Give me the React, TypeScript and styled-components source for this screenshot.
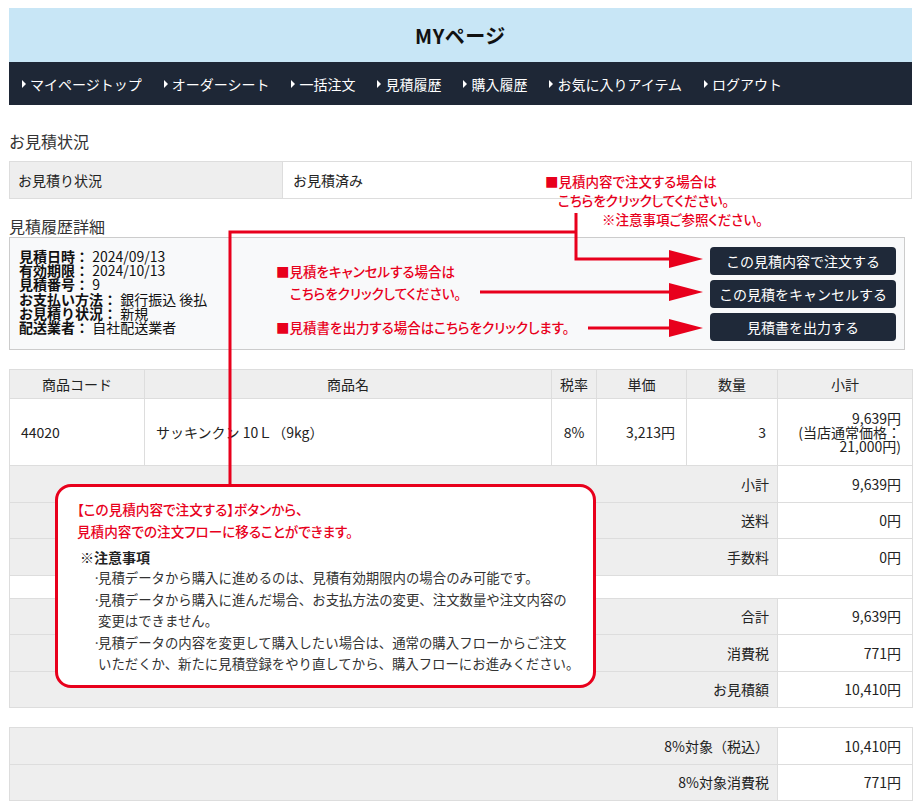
import React from "react";
import styled, { createGlobalStyle } from "styled-components";

const RED = "#e8001c";
const FONT = `"Noto Sans CJK JP", "Noto Sans", "Liberation Sans", sans-serif`;

const GlobalStyle = createGlobalStyle`
  html, body { margin: 0; padding: 0; background: #fff; }
  body { font-family: ${FONT}; color: #333; }
  * { box-sizing: border-box; }
`;

const Page = styled.div`
  position: relative;
  width: 920px;
  height: 810px;
  overflow: hidden;
  padding: 8px 8px 0 9px;
`;

const Header = styled.header`
  height: 54px;
  background: #c8e6f6;
  display: flex;
  align-items: center;
  justify-content: center;
`;

const Title = styled.h1`
  margin: 0;
  font-size: 20px;
  font-weight: 700;
  color: #111;
  letter-spacing: 0.5px;
`;

const Nav = styled.nav`
  height: 43px;
  background: #1e2736;
  display: flex;
  align-items: center;
  padding-left: 13px;
  gap: 22px;
`;

const NavItem = styled.a`
  display: flex;
  align-items: center;
  gap: 4px;
  color: #fff;
  font-size: 14px;
  text-decoration: none;
  white-space: nowrap;
  &::before {
    content: "";
    border-left: 4px solid #fff;
    border-top: 4px solid transparent;
    border-bottom: 4px solid transparent;
  }
`;

const SectionTitle = styled.h2<{ $top: number }>`
  margin: ${(p) => p.$top}px 0 0;
  font-size: 16px;
  font-weight: 400;
  line-height: 22px;
  color: #333;
`;

const StatusTable = styled.div`
  margin-top: 9px;
  height: 38px;
  display: grid;
  grid-template-columns: 272px 1fr;
  border: 1px solid #ddd;
`;

const StatusCell = styled.div<{ $label?: boolean }>`
  display: flex;
  align-items: center;
  padding-left: ${(p) => (p.$label ? 8 : 10)}px;
  font-size: 14px;
  color: #222;
  background: ${(p) => (p.$label ? "#eeeeee" : "#fff")};
  border-left: ${(p) => (p.$label ? "none" : "1px solid #ddd")};
`;

const DetailBox = styled.div`
  width: 896px;
  height: 113px;
  border: 1px solid #ccc;
  background: #f8f9fa;
  display: flex;
  justify-content: space-between;
  padding: 9px 8px 0 9px;
`;

const DetailList = styled.div`
  padding-top: 2px;
  font-size: 14px;
  line-height: 14.2px;
  color: #111;
`;

const DetailRow = styled.div`
  white-space: nowrap;
  b {
    font-weight: 700;
  }
`;

const ButtonStack = styled.div`
  display: flex;
  flex-direction: column;
  gap: 5px;
`;

const ActionButton = styled.button`
  width: 186px;
  height: 28px;
  border: none;
  border-radius: 4px;
  background: #1f2939;
  color: #fff;
  font-family: ${FONT};
  font-size: 14px;
  padding: 0;
  cursor: pointer;
`;

const Table = styled.table<{ $top: number }>`
  margin-top: ${(p) => p.$top}px;
  width: 903px;
  border-collapse: collapse;
  table-layout: fixed;
  font-size: 14px;
  color: #222;
`;

const Col = styled.col<{ $w: number }>`
  width: ${(p) => p.$w}px;
`;

const Th = styled.th`
  background: #eeeeee;
  font-weight: 400;
  height: 29px;
  padding: 0;
  border: 1px solid #ddd;
  text-align: center;
`;

const Td = styled.td<{ $align?: "left" | "center" | "right" }>`
  border: 1px solid #ddd;
  padding: 12px 11px;
  height: 66px;
  text-align: ${(p) => p.$align || "left"};
  line-height: 14px;
  white-space: nowrap;
`;

const SumLabel = styled.td`
  background: #eeeeee;
  border: 1px solid #ddd;
  text-align: right;
  padding: 0 8px 0 0;
  height: 36.5px;
`;

const SumValue = styled.td`
  border: 1px solid #ddd;
  text-align: right;
  padding: 0 11px 0 0;
  height: 36.5px;
`;

const BlankCell = styled.td`
  border: 1px solid #ddd;
  height: 23px;
  padding: 0;
`;

const Overlay = styled.svg`
  position: absolute;
  left: 0;
  top: 0;
  pointer-events: none;
`;

const RedNote = styled.div<{ $x: number; $y: number }>`
  position: absolute;
  left: ${(p) => p.$x}px;
  top: ${(p) => p.$y}px;
  color: ${RED};
  font-size: 13.5px;
  line-height: 18px;
  font-weight: 500;
  white-space: nowrap;
  font-feature-settings: "palt";
`;

const Callout = styled.div`
  position: absolute;
  left: 55px;
  top: 484px;
  width: 541px;
  height: 204px;
  border: 3px solid ${RED};
  border-radius: 16px;
  background: #fff;
  padding: 11px 8px 0 19px;
`;

const CalloutLead = styled.div`
  color: ${RED};
  font-size: 13.6px;
  line-height: 22px;
  font-weight: 500;
  white-space: nowrap;
  font-feature-settings: "palt";
`;

const CautionTitle = styled.div`
  margin-top: 5px;
  padding-left: 3px;
  font-size: 14px;
  line-height: 20px;
  font-weight: 700;
  color: #222;
`;

const CautionList = styled.ul`
  list-style: none;
  margin: 0;
  padding: 0 0 0 16px;
  font-size: 13.4px;
  line-height: 21.6px;
  color: #333;
`;

const CautionItem = styled.li`
  position: relative;
  padding-left: 5px;
  white-space: nowrap;
  &::before {
    content: "·";
    position: absolute;
    left: 0;
    top: 0;
  }
`;

const navItems = [
  "マイページトップ",
  "オーダーシート",
  "一括注文",
  "見積履歴",
  "購入履歴",
  "お気に入りアイテム",
  "ログアウト",
];

const details: [string, string][] = [
  ["見積日時：", "2024/09/13"],
  ["有効期限：", "2024/10/13"],
  ["見積番号：", "9"],
  ["お支払い方法：", "銀行振込 後払"],
  ["お見積り状況：", "新規"],
  ["配送業者：", "自社配送業者"],
];

const summary1: [string, string][] = [
  ["小計", "9,639円"],
  ["送料", "0円"],
  ["手数料", "0円"],
];
const summary2: [string, string][] = [
  ["合計", "9,639円"],
  ["消費税", "771円"],
  ["お見積額", "10,410円"],
];
const taxRows: [string, string][] = [
  ["8%対象（税込）", "10,410円"],
  ["8%対象消費税", "771円"],
];

const Arrow = ({ x1, y, x2 }: { x1: number; y: number; x2: number }) => (
  <>
    <line x1={x1} y1={y} x2={x2 - 32} y2={y} stroke={RED} strokeWidth={3} />
    <polygon points={`${x2 - 34},${y - 9} ${x2},${y} ${x2 - 34},${y + 9}`} fill={RED} />
  </>
);

export default function App() {
  return (
    <>
      <GlobalStyle />
      <Page>
        <Header>
          <Title>MYページ</Title>
        </Header>
        <Nav>
          {navItems.map((n) => (
            <NavItem key={n} href="#">
              {n}
            </NavItem>
          ))}
        </Nav>

        <SectionTitle $top={25}>お見積状況</SectionTitle>
        <StatusTable>
          <StatusCell $label>お見積り状況</StatusCell>
          <StatusCell>お見積済み</StatusCell>
        </StatusTable>

        <SectionTitle $top={16}>見積履歴詳細</SectionTitle>
        <DetailBox>
          <DetailList>
            {details.map(([k, v]) => (
              <DetailRow key={k}>
                <b>{k}</b> {v}
              </DetailRow>
            ))}
          </DetailList>
          <ButtonStack>
            <ActionButton>この見積内容で注文する</ActionButton>
            <ActionButton>この見積をキャンセルする</ActionButton>
            <ActionButton>見積書を出力する</ActionButton>
          </ButtonStack>
        </DetailBox>

        <Table $top={19}>
          <colgroup>
            <Col $w={135} />
            <Col $w={407} />
            <Col $w={45} />
            <Col $w={90} />
            <Col $w={91} />
            <Col $w={135} />
          </colgroup>
          <thead>
            <tr>
              <Th>商品コード</Th>
              <Th>商品名</Th>
              <Th>税率</Th>
              <Th>単価</Th>
              <Th>数量</Th>
              <Th>小計</Th>
            </tr>
          </thead>
          <tbody>
            <tr>
              <Td>44020</Td>
              <Td>サッキンクン 10Ｌ（9kg）</Td>
              <Td $align="center">8%</Td>
              <Td $align="right">3,213円</Td>
              <Td $align="right">3</Td>
              <Td $align="right">
                9,639円
                <br />
                (当店通常価格：
                <br />
                21,000円)
              </Td>
            </tr>
            {summary1.map(([k, v]) => (
              <tr key={k}>
                <SumLabel colSpan={5}>{k}</SumLabel>
                <SumValue>{v}</SumValue>
              </tr>
            ))}
            <tr>
              <BlankCell colSpan={6} />
            </tr>
            {summary2.map(([k, v]) => (
              <tr key={k}>
                <SumLabel colSpan={5}>{k}</SumLabel>
                <SumValue>{v}</SumValue>
              </tr>
            ))}
          </tbody>
        </Table>

        <Table $top={19}>
          <colgroup>
            <Col $w={768} />
            <Col $w={135} />
          </colgroup>
          <tbody>
            {taxRows.map(([k, v]) => (
              <tr key={k}>
                <SumLabel>{k}</SumLabel>
                <SumValue>{v}</SumValue>
              </tr>
            ))}
          </tbody>
        </Table>

        <Overlay width={920} height={810} viewBox="0 0 920 810">
          <polyline
            points="230,486 230,232 576,232"
            fill="none"
            stroke={RED}
            strokeWidth={3}
          />
          <polyline
            points="576,213 576,259 672,259"
            fill="none"
            stroke={RED}
            strokeWidth={3}
          />
          <polygon points="669,250 703,259 669,268" fill={RED} />
          <Arrow x1={480} y={292} x2={703} />
          <Arrow x1={588} y={328} x2={703} />
        </Overlay>

        <RedNote $x={545} $y={172}>■見積内容で注文する場合は</RedNote>
        <RedNote $x={558} $y={191}>こちらをクリックしてください。</RedNote>
        <RedNote $x={602} $y={210}>※注意事項ご参照ください。</RedNote>
        <RedNote $x={276} $y={262}>■見積をキャンセルする場合は</RedNote>
        <RedNote $x={290} $y={284}>こちらをクリックしてください。</RedNote>
        <RedNote $x={276} $y={318}>■見積書を出力する場合はこちらをクリックします。</RedNote>

        <Callout>
          <CalloutLead>【この見積内容で注文する】ボタンから、</CalloutLead>
          <CalloutLead>見積内容での注文フローに移ることができます。</CalloutLead>
          <CautionTitle>※注意事項</CautionTitle>
          <CautionList>
            <CautionItem>見積データから購入に進めるのは、見積有効期限内の場合のみ可能です。</CautionItem>
            <CautionItem>
              見積データから購入に進んだ場合、お支払方法の変更、注文数量や注文内容の
              <br />
              変更はできません。
            </CautionItem>
            <CautionItem>
              見積データの内容を変更して購入したい場合は、通常の購入フローからご注文
              <br />
              いただくか、新たに見積登録をやり直してから、購入フローにお進みください。
            </CautionItem>
          </CautionList>
        </Callout>
      </Page>
    </>
  );
}
